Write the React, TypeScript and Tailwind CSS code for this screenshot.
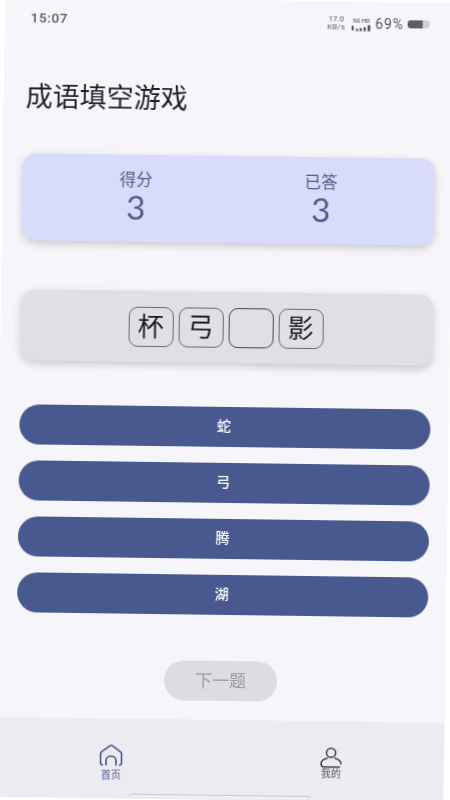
const cjk = "font-['Noto_Sans_CJK_SC','Noto_Sans',sans-serif]";

function HomeIcon() {
  return (
    <svg viewBox="0 0 24 24" className="w-[24px] h-[24px]" fill="none" stroke="#47598f" strokeWidth="1.6" strokeLinecap="round" strokeLinejoin="round">
      <path d="M3.5 21.5 C2.5 21.5 1.5 20.8 1.5 19.5 V10.5 C1.5 9.5 2 8.8 2.8 8.2 L10 2.8 C11.2 1.9 12.8 1.9 14 2.8 L21.2 8.2 C22 8.8 22.5 9.5 22.5 10.5 V19.5 C22.5 20.8 21.8 21.5 20.5 21.5" />
      <path d="M7 21.5 V17 C7 14.5 9.2 12.8 12 12.8 C14.8 12.8 17 14.5 17 17 V21.5" />
    </svg>
  );
}

function UserIcon() {
  return (
    <svg viewBox="0 0 24 24" className="w-[24px] h-[24px]" fill="none" stroke="#3f3f46" strokeWidth="1.5" strokeLinecap="round" strokeLinejoin="round">
      <circle cx="12" cy="6.5" r="4.6" />
      <path d="M8 12 C4.8 12.8 2 15 2 17.6 C2 19.4 3 20.8 5 20.8 H20.5" />
      <path d="M16 12 C19.2 12.8 22 15 22 17.6" />
    </svg>
  );
}

function SignalBars() {
  return (
    <svg viewBox="0 0 20 7" className="w-[20px] h-[7px]" fill="#55555c">
      <rect x="0" y="1" width="2" height="5" rx="1" />
      <rect x="4.5" y="4" width="2" height="2.5" />
      <rect x="8" y="3.5" width="2.2" height="3" />
      <rect x="12" y="2.5" width="2.2" height="4" />
      <rect x="16" y="0.5" width="2.6" height="6" />
    </svg>
  );
}

function StatusBar() {
  return (
    <div className="h-[42px] flex justify-between items-start pl-[26px] pr-[24px] text-[#55555c] font-['Roboto',sans-serif]">
      <span className="mt-[12px] text-[13.5px] leading-[16px] font-medium tracking-[0.6px]">15:07</span>
      <div className="mt-[14px] flex items-center">
        <div className="w-[20px] text-center text-[7.5px] leading-[8px] tracking-[0.3px]">
          <div>17.0</div>
          <div>KB/s</div>
        </div>
        <div className="ml-[5px] flex flex-col items-center">
          <span className="text-[6px] leading-[8px] font-medium">5G HD</span>
          <SignalBars />
        </div>
        <span className="ml-[4px] text-[14px] leading-[16px] tracking-[0.8px]">69%</span>
        <div className="ml-[4px] w-[22px] h-[8px] rounded-[3px] bg-[#cfcfd3] overflow-hidden">
          <div className="w-[15px] h-full bg-[#5c5c62] rounded-l-[2px]" />
        </div>
      </div>
    </div>
  );
}

function Stat({ label, value }: { label: string; value: string }) {
  return (
    <div className="w-[185px] flex flex-col items-center text-[#4f5d8c] -mt-[4px]">
      <span className="text-[16.5px] leading-[20px]">{label}</span>
      <span className="text-[33px] leading-[36px] font-['Lato',sans-serif]">{value}</span>
    </div>
  );
}

function Tile({ char, dark }: { char?: string; dark?: boolean }) {
  return (
    <div className={`w-[45px] h-[40px] rounded-[9px] border flex items-center justify-center text-[26px] leading-[36px] pb-[3px] text-[#1c1c20] ${dark ? "border-[#47474d]" : "border-[#6a6a70]"}`}>
      {char}
    </div>
  );
}

const options = ["蛇", "弓", "腾", "湖"];

export default function App() {
  return (
    <div className={`w-[450px] h-[800px] overflow-hidden bg-white ${cjk}`}>
      <div className="w-[449px] h-[800px] ml-[5px] -mt-[3px] origin-top-left rotate-[0.75deg] bg-[#f5f5fa] flex flex-col blur-[0.3px]">
        <StatusBar />
        <h1 className="mt-[38px] ml-[22px] h-[36px] text-[27px] leading-[36px] font-normal text-[#1f1f24]">成语填空游戏</h1>

        <div className="mt-[40px] ml-[20px] mr-[17px] h-[87px] rounded-[14px] bg-[#d8dcfa] shadow-[0_3px_8px_rgba(0,0,0,0.18)] flex justify-center items-center">
          <Stat label="得分" value="3" />
          <Stat label="已答" value="3" />
        </div>

        <div className="mt-[49px] ml-[20px] mr-[17px] pr-[2px] h-[71px] rounded-[14px] bg-[#dfdfe6] shadow-[0_3px_8px_rgba(0,0,0,0.18)] flex justify-center items-center gap-[5px]">
          <Tile char="杯" />
          <Tile char="弓" />
          <Tile dark />
          <Tile char="影" />
        </div>

        <div className="mt-[44px] ml-[20px] mr-[18px] flex flex-col gap-[16px]">
          {options.map((o) => (
            <button key={o} className="h-[40px] rounded-full bg-[#47598f] text-white text-[14px] font-medium pb-[4px] pr-[2px]">
              {o}
            </button>
          ))}
        </div>

        <button className="mt-[46px] ml-[168px] w-[113px] h-[40px] rounded-full bg-[#dcdce2] text-[#9a9aa0] text-[17px] pb-[2px]">
          下一题
        </button>

        <nav className="mt-[19px] flex-1 bg-[#ebebf1] flex flex-col items-center">
          <div className="flex justify-center pt-[25px] pl-[3px]">
            <div className="w-[220px] flex flex-col items-center text-[#4f5d8c]">
              <HomeIcon />
              <span className="text-[10px] leading-[14px]">首页</span>
            </div>
            <div className="w-[220px] flex flex-col items-center text-[#55555c]">
              <UserIcon />
              <span className="-mt-[4px] text-[10px] leading-[14px]">我的</span>
            </div>
          </div>
          <div className="mt-auto mb-[2px] w-[180px] h-[3px] rounded-t-[2px] border border-b-0 border-[#c9c9cf] bg-[#f0f0f4]" />
        </nav>
      </div>
    </div>
  );
}
